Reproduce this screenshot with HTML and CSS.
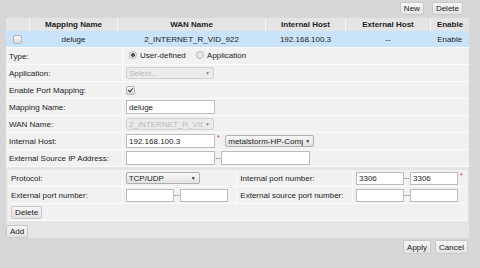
FILE: index.html
```html
<!DOCTYPE html>
<html lang="en">
<head>
    <meta charset="UTF-8">
    <title>Port Mapping</title>
    <link rel="stylesheet" href="styles.css">
</head>
<body>
    <div class="page">
        <!-- list toolbar -->
        <div class="toolbar">
            <button class="btn">New</button>
            <button class="btn">Delete</button>
        </div>

        <div class="panel">
            <table class="list">
                <thead>
                    <tr>
                        <th class="c-check"></th>
                        <th class="c-name">Mapping Name</th>
                        <th class="c-wan">WAN Name</th>
                        <th class="c-int">Internal Host</th>
                        <th class="c-ext">External Host</th>
                        <th>Enable</th>
                    </tr>
                </thead>
                <tbody>
                    <tr class="selected">
                        <td><input type="checkbox" class="check"></td>
                        <td>deluge</td>
                        <td>2_INTERNET_R_VID_922</td>
                        <td>192.168.100.3</td>
                        <td>--</td>
                        <td>Enable</td>
                    </tr>
                </tbody>
            </table>

            <table class="form">
                <tr>
                    <td class="label">Type:</td>
                    <td>
                        <label class="radio"><input type="radio" name="type" checked>User-defined</label>
                        <label class="radio"><input type="radio" name="type">Application</label>
                    </td>
                </tr>
                <tr>
                    <td class="label">Application:</td>
                    <td>
                        <span class="select wide disabled"><select disabled><option>Select...</option></select><span class="arrow">▼</span></span>
                    </td>
                </tr>
                <tr>
                    <td class="label">Enable Port Mapping:</td>
                    <td><input type="checkbox" class="check ticked" checked disabled></td>
                </tr>
                <tr>
                    <td class="label">Mapping Name:</td>
                    <td><input type="text" class="text wide" value="deluge"></td>
                </tr>
                <tr>
                    <td class="label">WAN Name:</td>
                    <td>
                        <span class="select wide disabled"><select disabled><option>2_INTERNET_R_VID_922</option></select><span class="arrow">▼</span></span>
                    </td>
                </tr>
                <tr>
                    <td class="label">Internal Host:</td>
                    <td>
                        <input type="text" class="text wide" value="192.168.100.3"><span class="req">*</span>
                        <span class="select host"><select><option>metalstorm-HP-Compaq</option></select><span class="arrow">▼</span></span>
                    </td>
                </tr>
                <tr>
                    <td class="label">External Source IP Address:</td>
                    <td>
                        <input type="text" class="text wide"><span class="dash">--</span><input type="text" class="text host-w">
                    </td>
                </tr>
            </table>

            <!-- port section -->
            <div class="ports">
                <table class="port-grid">
                    <tr>
                        <td class="label pl1">Protocol:</td>
                        <td class="pv1">
                            <span class="select proto"><select><option>TCP/UDP</option></select><span class="arrow">▼</span></span>
                        </td>
                        <td class="label pl2">Internal port number:</td>
                        <td>
                            <input type="text" class="text port" value="3306"><span class="dash">--</span><input type="text" class="text port" value="3306"><span class="req">*</span>
                        </td>
                    </tr>
                    <tr>
                        <td class="label">External port number:</td>
                        <td>
                            <input type="text" class="text port"><span class="dash">--</span><input type="text" class="text port">
                        </td>
                        <td class="label">External source port number:</td>
                        <td>
                            <input type="text" class="text port"><span class="dash">--</span><input type="text" class="text port">
                        </td>
                    </tr>
                    <tr>
                        <td colspan="4" class="del-cell"><button class="btn">Delete</button></td>
                    </tr>
                </table>
            </div>

            <div class="add-row">
                <button class="btn">Add</button>
            </div>
        </div>

        <div class="footer">
            <button class="btn">Apply</button>
            <button class="btn">Cancel</button>
        </div>
    </div>
</body>
</html>
```

FILE: styles.css
```css
body {
    margin: 0;
    background-color: #d7d7d7;
    font-family: "Liberation Sans", Arial, sans-serif;
    font-size: 8px;
    color: #222;
}
.page {
    width: 463px;
    margin-left: 6px;
}
.btn {
    font-family: inherit;
    font-size: 8px;
    color: #222;
    height: 13px;
    padding: 0 3px;
    margin: 0;
    line-height: 11px;
    background: linear-gradient(#f6f6f6, #e2e2e2);
    border: 1px solid #c8c8c8;
    border-radius: 2px;
}
.toolbar {
    height: 18px;
    display: flex;
    justify-content: flex-end;
    align-items: flex-start;
    gap: 8px;
    padding: 2px 6px 0 0;
    box-sizing: border-box;
}
.panel {
    background-color: #e5e5e5;
}
table {
    border-collapse: collapse;
    width: 100%;
}
.list th {
    height: 13px;
    padding: 0;
    background-color: #e4e4e4;
    border-left: 1px solid #f4f4f4;
    font-weight: bold;
    text-align: center;
}
.list th:first-child {
    border-left: none;
}
.c-check { width: 23px; }
.c-name { width: 87px; }
.c-wan { width: 147px; }
.c-int { width: 79px; }
.c-ext { width: 84px; }
.list td {
    height: 16px;
    padding: 0;
    text-align: center;
    background-color: #c9e4fa;
}
.check {
    appearance: none;
    width: 9px;
    height: 9px;
    margin: 0;
    vertical-align: middle;
    border: 1px solid #b4b4b4;
    border-radius: 2px;
    background: linear-gradient(#f4f4f4, #dcdcdc);
    position: relative;
}
.check.ticked::after {
    content: "";
    position: absolute;
    left: 2px;
    top: 0;
    width: 2px;
    height: 4px;
    border: solid #333;
    border-width: 0 1.5px 1.5px 0;
    transform: rotate(40deg);
}
.form td, .port-grid td {
    height: 16px;
    padding: 0 0 0 3px;
    background-color: #f1f1f1;
    border: 1px solid #fbfbfb;
    white-space: nowrap;
}
.form td.label {
    width: 113px;
}
.form td {
    border-left: none;
    border-right: none;
}
.form td.label {
    border-right: 1px solid #fbfbfb;
}
.radio {
    display: inline-flex;
    align-items: center;
    margin-right: 5px;
    margin-left: 3px;
}
.radio input {
    appearance: none;
    width: 8px;
    height: 8px;
    margin: 0 3px 0 0;
    border: 1px solid #b8b8b8;
    border-radius: 50%;
    background: #e9e9e9;
    box-sizing: border-box;
}
.radio input:checked {
    background: radial-gradient(circle, #555 0 1.6px, #e9e9e9 2.2px);
}
.select {
    position: relative;
    display: inline-block;
    vertical-align: middle;
}
.select select {
    appearance: none;
    font-family: inherit;
    font-size: 8px;
    color: #222;
    height: 12px;
    padding: 0 10px 0 2px;
    margin: 0;
    border: 1px solid #b0b0b0;
    border-radius: 2px;
    background: linear-gradient(#f7f7f7, #e3e3e3);
    box-sizing: border-box;
    display: block;
}
.select.disabled select {
    color: #a0a0a0;
    border-color: #c4c4c4;
    background: #e9e9e9;
}
.select .arrow {
    position: absolute;
    right: 4px;
    top: 3px;
    font-size: 5px;
    color: #333;
}
.select.disabled .arrow {
    color: #888;
}
.select.wide select { width: 88px; }
.select.host select { width: 89px; }
.select.proto select { width: 74px; }
.text {
    font-family: inherit;
    font-size: 8px;
    color: #222;
    height: 14px;
    padding: 0 2px;
    margin: 0;
    border: 1px solid #bdbdbd;
    background: #fff;
    box-sizing: border-box;
    vertical-align: middle;
}
.text.wide { width: 89px; }
.text.host-w { width: 89px; }
.text.port { width: 48px; height: 13px; }
.req {
    color: #e03030;
    display: inline-block;
    width: 6px;
    padding-left: 2px;
    vertical-align: top;
    font-size: 7px;
}
.dash {
    display: inline-block;
    width: 6px;
    text-align: center;
    color: #555;
}
.ports {
    margin: 3px 2px 0;
}
.port-grid td.pl1 { width: 112px; }
.port-grid td.pv1 { width: 111px; }
.port-grid td.pl2 { width: 112px; }
.port-grid td {
    border-top: none;
    border-left: none;
}
.del-cell {
    height: 16px;
}
.add-row {
    padding-top: 4px;
    height: 13px;
}
.footer {
    display: flex;
    justify-content: flex-end;
    gap: 4px;
    padding: 2px 1px 0 0;
}
.footer .btn { height: 14px; }
```
